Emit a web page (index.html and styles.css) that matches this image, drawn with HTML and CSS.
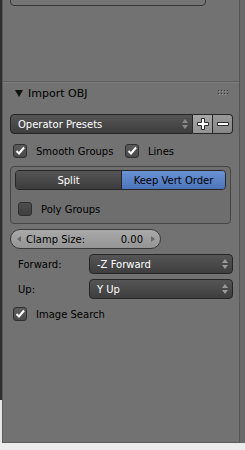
FILE: index.html
```html
<!DOCTYPE html>
<html>
<head>
<meta charset="utf-8">
<link rel="stylesheet" href="styles.css">
</head>
<body>
<div class="app">
  <div class="main">
    <div class="leftstrip"><div class="dark"></div></div>
    <div class="panel">
      <div class="topbox"></div>
      <div class="sep"></div>
      <div class="header">
        <span class="tri"></span>
        <span class="title">Import OBJ</span>
        <span class="grip">
          <svg width="10" height="6" viewBox="0 0 10 6"><g fill="#3a3a3a"><rect x="0" y="0" width="1" height="1"/><rect x="3" y="0" width="1" height="1"/><rect x="6" y="0" width="1" height="1"/><rect x="9" y="0" width="1" height="1"/><rect x="0" y="3" width="1" height="1"/><rect x="3" y="3" width="1" height="1"/><rect x="6" y="3" width="1" height="1"/><rect x="9" y="3" width="1" height="1"/></g><g fill="#9a9a9a"><rect x="1" y="1" width="1" height="1"/><rect x="4" y="1" width="1" height="1"/><rect x="7" y="1" width="1" height="1"/><rect x="1" y="4" width="1" height="1"/><rect x="4" y="4" width="1" height="1"/><rect x="7" y="4" width="1" height="1"/></g></svg>
        </span>
      </div>
      <div class="presets">
        <div class="menu preset-menu">
          <span>Operator Presets</span>
          <span class="updown"><svg width="6" height="12" viewBox="0 0 6 12"><path d="M3 1 L6 5 L0 5 Z M0 7 L6 7 L3 11 Z" fill="#8a8a8a"/></svg></span>
        </div>
        <div class="ibtn plus"><svg width="14" height="14" viewBox="0 0 14 14"><path d="M5.5 1.5h3v4h4v3h-4v4h-3v-4h-4v-3h4z" fill="#fff" stroke="#2a2a2a" stroke-width="1"/></svg></div>
        <div class="ibtn minus"><svg width="14" height="14" viewBox="0 0 14 14"><path d="M1.5 5.5h11v3h-11z" fill="#fff" stroke="#2a2a2a" stroke-width="1"/></svg></div>
      </div>
      <div class="row checks first">
        <label class="check"><span class="box on"><svg width="12" height="12" viewBox="0 0 12 12"><path d="M2.5 6 L5 8.5 L10 2.5" fill="none" stroke="#fff" stroke-width="2"/></svg></span>Smooth Groups</label>
        <label class="check"><span class="box on"><svg width="12" height="12" viewBox="0 0 12 12"><path d="M2.5 6 L5 8.5 L10 2.5" fill="none" stroke="#fff" stroke-width="2"/></svg></span>Lines</label>
      </div>
      <div class="group">
        <div class="toggle">
          <div class="seg split">Split</div>
          <div class="seg keep">Keep Vert Order</div>
        </div>
        <label class="check poly"><span class="box off"></span>Poly Groups</label>
      </div>
      <div class="slider">
        <span class="arr"><svg width="4" height="6" viewBox="0 0 4 6"><path d="M4 0 L0 3 L4 6Z" fill="#6a6a6a"/></svg></span>
        <span class="slabel">Clamp Size:</span>
        <span class="sval">0.00</span>
        <span class="arr"><svg width="4" height="6" viewBox="0 0 4 6"><path d="M0 0 L4 3 L0 6Z" fill="#6a6a6a"/></svg></span>
      </div>
      <div class="field">
        <span class="flabel">Forward:</span>
        <div class="menu fmenu"><span>-Z Forward</span><span class="updown"><svg width="6" height="12" viewBox="0 0 6 12"><path d="M3 1 L6 5 L0 5 Z M0 7 L6 7 L3 11 Z" fill="#9a9a9a"/></svg></span></div>
      </div>
      <div class="field">
        <span class="flabel">Up:</span>
        <div class="menu fmenu"><span>Y Up</span><span class="updown"><svg width="6" height="12" viewBox="0 0 6 12"><path d="M3 1 L6 5 L0 5 Z M0 7 L6 7 L3 11 Z" fill="#9a9a9a"/></svg></span></div>
      </div>
      <div class="row checks last">
        <label class="check"><span class="box on"><svg width="12" height="12" viewBox="0 0 12 12"><path d="M2.5 6 L5 8.5 L10 2.5" fill="none" stroke="#fff" stroke-width="2"/></svg></span>Image Search</label>
      </div>
    </div>
    <div class="rightstrip"></div>
  </div>
  <div class="bottom"></div>
</div>
</body>
</html>
```

FILE: styles.css
```css
* { box-sizing: border-box; }
html, body { margin: 0; padding: 0; }
body {
  width: 245px;
  height: 450px;
  overflow: hidden;
  background: #ececec;
  font-family: "DejaVu Sans", sans-serif;
  font-size: 10px;
  color: #000;
}
.app { display: flex; flex-direction: column; height: 450px; }
.main { display: flex; height: 443px; }
.leftstrip { width: 2px; display: flex; flex-direction: column; background: #e6e6e6; }
.leftstrip .dark { height: 400px; background: #2e2e2e; }
.panel {
  flex: 1;
  background: #727272;
  border-left: 1px solid #5c5c5c;
  border-right: 1px solid #555;
  border-bottom: 1px solid #5c5c5c;
  display: flex;
  flex-direction: column;
  overflow: hidden;
}
.rightstrip { width: 5px; background: #6a6a6a; }
.bottom { height: 7px; background: #ececec; }

.topbox {
  margin: -10px 0 0 7px;
  width: 196px;
  height: 16px;
  border: 1px solid #383838;
  border-radius: 4px;
  background: #747474;
  flex: none;
}
.sep {
  margin-top: 75px;
  height: 2px;
  border-top: 1px solid #5e5e5e;
  border-bottom: 1px solid #7c7c7c;
  flex: none;
}
.header {
  display: flex;
  align-items: center;
  height: 20px;
  padding-left: 12px;
  padding-right: 11px;
  font-size: 11px;
  color: #000;
}
.tri {
  width: 0; height: 0;
  border-left: 4px solid transparent;
  border-right: 4px solid transparent;
  border-top: 7px solid #111;
  margin-right: 5px;
}
.title { flex: 1; }
.grip { display: flex; }

.presets {
  display: flex;
  margin: 11px 6px 0 7px;
  height: 20px;
  flex: none;
}
.menu {
  display: flex;
  align-items: center;
  justify-content: space-between;
  color: #fff;
  background: linear-gradient(#555 0%, #3e3e3e 100%);
  border: 1px solid #262626;
  border-radius: 4px;
  padding: 0 4px 0 7px;
}
.preset-menu { flex: 1; border-radius: 4px 0 0 4px; }
.updown { display: flex; }
.ibtn {
  width: 20px;
  display: flex;
  align-items: center;
  justify-content: center;
  border: 1px solid #262626;
  border-left: none;
}
.plus { background: linear-gradient(#a6a6a6, #939393); }
.minus { background: linear-gradient(#999, #878787); border-radius: 0 4px 4px 0; }

.row { display: flex; flex: none; }
.checks { margin: 8px 0 0 10px; height: 18px; align-items: center; }
.checks.last { margin-top: 6px; }
.check { display: flex; align-items: center; }
.checks .check:first-child { width: 112px; }
.box {
  width: 14px; height: 14px;
  border: 1px solid #2e2e2e;
  border-radius: 3px;
  margin-right: 9px;
  display: flex;
  align-items: center;
  justify-content: center;
}
.box.on { background: linear-gradient(#5c5c5c, #4a4a4a); }
.box.off { background: linear-gradient(#4e4e4e, #3e3e3e); }

.group {
  margin: 6px 8px 0 7px;
  border: 1px solid #454545;
  border-radius: 4px;
  background: #6e6e6e;
  padding: 3px 4px 4px 4px;
  height: 58px;
  flex: none;
}
.toggle { display: flex; height: 20px; border: 1px solid #262626; border-radius: 4px; overflow: hidden; }
.seg { display: flex; align-items: center; justify-content: center; }
.split { width: 106px; color: #fff; background: linear-gradient(#555, #3c3c3c); border-right: 1px solid #262626; }
.keep { flex: 1; color: #000; background: linear-gradient(#6a93d6, #4b74ba); }
.poly { margin: 12px 0 0 3px; }

.slider {
  margin: 5px 0 0 7px;
  width: 151px;
  height: 20px;
  flex: none;
  border: 1px solid #3a3a3a;
  border-radius: 10px;
  background: linear-gradient(#a9a9a9, #959595);
  display: flex;
  align-items: center;
  padding: 0 5px 0 6px;
}
.arr { display: flex; }
.slabel { margin-left: 5px; flex: 1; }
.sval { margin-right: 8px; }

.field { display: flex; align-items: center; margin: 5px 6px 0 15px; height: 20px; flex: none; }
.flabel { width: 71px; }
.fmenu { flex: 1; height: 20px; padding-left: 7px; }
```
